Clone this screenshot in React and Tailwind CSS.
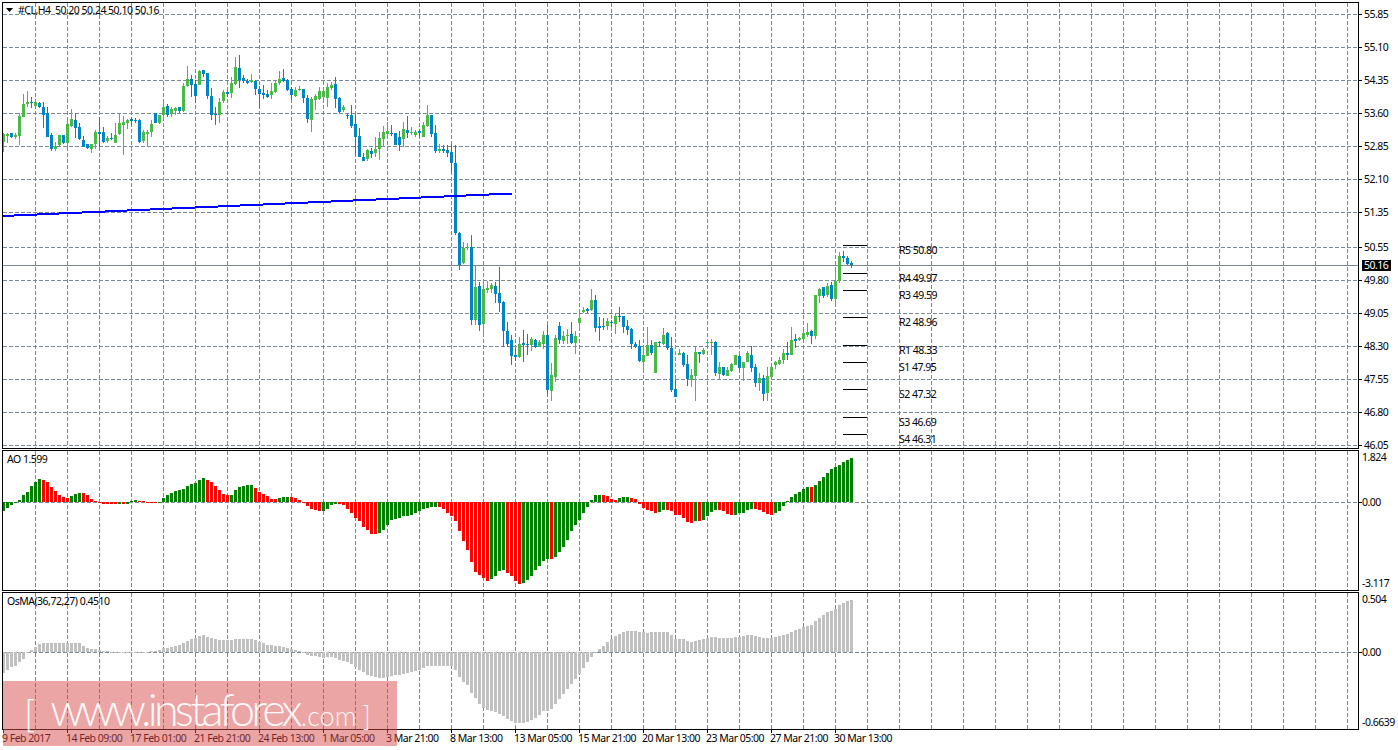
import React from "react";

const G = "#4cb848";
const B = "#0083c7";
const GRID = "#778899";

// [high, bodyTop, bodyBottom, low, colour], read at 3x from the left half of the chart
const candlesLeft = [
  [398, 402, 425, 455, G], [400, 402, 408, 430, G], [398, 399, 412, 415, B], [400, 405, 410, 418, G],
  [340, 348, 407, 435, G], [282, 312, 350, 352, G], [272, 305, 312, 322, G], [292, 307, 310, 325, B],
  [305, 306, 318, 322, G], [305, 309, 321, 325, B], [305, 322, 345, 385, B], [322, 339, 410, 412, B],
  [400, 405, 447, 452, B], [425, 437, 447, 452, G], [405, 405, 435, 437, G], [405, 405, 430, 432, B],
  [362, 372, 430, 442, G], [327, 357, 378, 380, G], [340, 360, 384, 415, B], [370, 382, 418, 420, B],
  [408, 420, 440, 440, B], [432, 432, 445, 447, B], [432, 432, 446, 460, G], [390, 396, 432, 447, G],
  [350, 396, 402, 440, B], [380, 396, 426, 428, B], [408, 414, 424, 428, G], [400, 413, 416, 420, B],
  [370, 405, 428, 430, G], [340, 370, 402, 405, G], [348, 366, 374, 465, G], [358, 360, 368, 388, G],
  [352, 357, 362, 375, B], [355, 360, 363, 370, B], [358, 360, 427, 430, B], [390, 396, 424, 430, G],
  [390, 396, 402, 438, G], [360, 372, 396, 410, G], [340, 340, 368, 370, B], [345, 346, 368, 372, G],
  [305, 320, 345, 352, G], [312, 318, 345, 350, B], [322, 327, 342, 350, G], [320, 323, 333, 345, G],
  [320, 321, 333, 340, B], [250, 258, 333, 335, G], [198, 237, 258, 262, G], [225, 237, 255, 290, B],
  [240, 252, 288, 308, B], [210, 213, 254, 255, G], [210, 211, 222, 230, B], [218, 219, 288, 298, B],
  [265, 288, 344, 360, B], [320, 342, 346, 375, B], [295, 306, 344, 370, G], [270, 277, 304, 310, G],
  [272, 277, 282, 290, B], [230, 250, 278, 295, G], [170, 202, 252, 255, G], [165, 205, 240, 265, B],
  [225, 235, 243, 250, B], [238, 242, 248, 253, B], [222, 240, 246, 248, G], [240, 243, 267, 285, B],
  [258, 267, 282, 325, B], [255, 280, 285, 298, B], [270, 283, 291, 295, B], [250, 274, 285, 296, G],
  [240, 248, 275, 280, G], [212, 238, 250, 255, G], [208, 234, 242, 245, B], [238, 240, 270, 272, B],
  [260, 266, 286, 300, B], [262, 270, 288, 290, G], [258, 266, 268, 272, G], [266, 267, 293, 310, B],
  [285, 293, 358, 368, B], [292, 296, 360, 395, G], [282, 288, 300, 330, G], [262, 272, 298, 300, G],
  [265, 272, 292, 300, G], [250, 262, 294, 322, G], [245, 254, 264, 270, G], [232, 252, 296, 325, B],
  [290, 294, 335, 338, B], [316, 321, 330, 335, G], [340, 344, 347, 358, B], [315, 346, 378, 385, B],
  [345, 372, 410, 465, B], [385, 408, 470, 472, B], [460, 470, 483, 484, B], [448, 450, 478, 482, G],
  [445, 452, 462, 475, B], [410, 447, 458, 470, G], [395, 413, 448, 480, G], [378, 396, 416, 440, G],
  [367, 393, 402, 410, G], [375, 398, 402, 408, B], [398, 398, 435, 435, B], [392, 410, 435, 452, B],
  [365, 388, 416, 440, G], [348, 390, 398, 415, B], [380, 396, 398, 405, G], [390, 396, 404, 410, G],
  [388, 394, 400, 410, B], [365, 376, 410, 412, G], [315, 345, 378, 380, G], [345, 345, 402, 412, B],
  [375, 400, 452, 460, B], [432, 448, 452, 458, G], [435, 448, 452, 460, B], [435, 450, 458, 470, B],
  [432, 456, 490, 518, B], [435, 490, 700, 705, B],
];

// same thing for the right half, these numbers start at y = 140
const candlesRight = [
  [277, 280, 375, 390, B], [305, 323, 370, 372, G], [310, 321, 324, 330, G], [285, 322, 540, 555, B],
  [378, 441, 540, 555, G], [425, 438, 555, 572, B], [420, 447, 552, 585, G], [422, 444, 450, 460, G],
  [430, 435, 447, 460, G], [425, 438, 462, 490, B], [382, 460, 488, 517, B], [482, 486, 573, 620, B],
  [545, 573, 612, 620, B], [585, 600, 648, 675, B], [625, 645, 650, 662, B], [590, 612, 652, 655, G],
  [570, 609, 614, 667, B], [582, 612, 616, 645, B], [590, 598, 615, 632, G], [598, 600, 620, 625, B],
  [600, 606, 620, 622, G], [572, 585, 612, 627, G], [555, 585, 750, 765, B], [668, 705, 752, 783, G],
  [585, 595, 710, 725, G], [545, 558, 600, 612, B], [572, 588, 603, 612, G], [567, 586, 588, 612, G],
  [545, 582, 608, 612, B], [572, 588, 608, 642, G], [520, 534, 548, 567, G], [502, 510, 515, 518, G],
  [505, 507, 512, 520, B], [447, 480, 510, 512, G], [465, 480, 563, 575, B], [530, 558, 564, 602, B],
  [535, 558, 560, 570, B], [535, 543, 557, 570, G], [540, 546, 550, 560, B], [522, 528, 552, 582, G],
  [502, 528, 531, 545, B], [528, 528, 560, 580, B], [540, 558, 570, 585, B], [565, 568, 612, 628, B],
  [605, 612, 620, 625, B], [600, 618, 663, 665, B], [620, 645, 666, 690, G], [560, 615, 647, 648, G],
  [600, 615, 640, 645, B], [605, 606, 698, 698, G], [603, 606, 609, 620, B], [563, 585, 613, 615, G],
  [575, 580, 624, 630, B], [590, 624, 750, 757, B], [720, 747, 770, 770, B], [628, 640, 644, 645, G],
  [635, 639, 675, 680, B], [645, 672, 717, 738, B], [688, 705, 720, 740, G], [620, 636, 707, 782, G],
  [636, 636, 641, 668, B], [625, 630, 642, 645, G], [597, 606, 608, 622, G], [598, 606, 608, 645, G],
  [603, 606, 698, 708, B], [667, 682, 702, 718, G], [680, 682, 705, 708, B], [680, 690, 708, 708, G],
  [670, 672, 693, 695, G], [645, 645, 675, 676, G], [645, 648, 684, 692, B], [665, 666, 684, 722, G],
  [632, 638, 666, 667, G], [618, 645, 683, 695, B], [672, 681, 729, 742, B], [698, 714, 729, 752, G],
  [705, 714, 762, 782, B], [682, 708, 758, 782, G], [682, 682, 710, 715, G], [663, 667, 675, 688, G],
  [650, 660, 672, 675, G], [628, 639, 660, 672, G], [605, 639, 645, 660, B], [560, 600, 645, 645, G],
  [583, 597, 603, 624, B], [590, 594, 600, 602, G], [573, 579, 597, 600, G], [548, 576, 585, 590, G],
  [570, 573, 588, 612, B], [465, 465, 588, 597, G], [445, 447, 468, 490, G], [440, 441, 468, 475, B],
  [430, 438, 466, 472, G], [425, 435, 477, 484, B], [393, 422, 477, 494, G], [335, 348, 424, 430, G],
  [333, 348, 354, 367, B], [348, 354, 372, 375, B], [363, 369, 376, 384, B],
];

const candles = [
  ...candlesLeft.map(([h, t, b, l, c]) => [h / 3, t / 3, b / 3, l / 3, c]),
  ...candlesRight.map(([h, t, b, l, c]) => [140 + h / 3, 140 + t / 3, 140 + b / 3, 140 + l / 3, c]),
];

// heights above (+) or under (-) the zero line, at 3x
const aoValues = [
  -28, -17, -9, -2, 6, 20, 30, 48, 60, 70, 67, 61, 46, 34, 22, 16, 13, 19, 25, 28, 28, 22, 10, 4, -3, -5, -5, -5, -7, -5,
  -7, -5, 3, 6, 3, 3, -2, -3, -4, -2, 12, 21, 27, 33, 36, 39, 48, 54, 57, 66, 72, 66, 60, 48, 36, 24, 20, 21, 36, 45, 48,
  51, 51, 42, 30, 24, 18, 9, 9, 12, 15, 15, 15, 12, 6, -3, -12, -22, -25, -28, -28, -20, -10, -5, -7, -10, -20, -32, -47,
  -58, -75, -83, -95, -95, -92, -83, -68, -55, -50, -47, -41, -41, -38, -32, -27, -22, -17, -14, -14, -14, -20, -32, -42,
  -57, -87, -117, -144, -180, -210, -219, -228, -237, -231, -222, -207, -204, -213, -222, -237, -246, -243, -234, -222,
  -204, -192, -177, -171, -171, -165, -150, -135, -114, -87, -69, -54, -33, -14, 6, 21, 21, 21, 18, 9, 6, 12, 15, 15, 12,
  9, -6, -18, -24, -27, -33, -30, -24, -24, -27, -39, -39, -48, -60, -63, -57, -57, -54, -42, -30, -24, -24, -27, -36, -39,
  -39, -33, -33, -24, -21, -21, -24, -30, -36, -39, -33, -27, -11, 3, 15, 24, 30, 39, 45, 45, 51, 63, 75, 87, 99, 105, 111,
  120, 126, 132,
];

const aoRed = [
  [10, 16], [20, 28], [30, 30], [34, 38], [51, 56], [63, 68], [72, 79], [84, 93], [109, 121], [126, 129], [137, 137],
  [150, 153], [157, 163], [166, 172], [174, 174], [179, 182], [188, 192], [202, 202],
];

const osmaValues = [
  -62, -53, -46, -41, -31, -20, -3, 6, 15, 24, 27, 28, 27, 26, 26, 26, 26, 27, 28, 26, 18, 12, 9, 9, 6, 3, 1, -1, -2, -1,
  -1, 0, 0, 0, -1, -1, 0, 2, 3, 6, 12, 12, 15, 18, 21, 27, 33, 39, 42, 48, 51, 45, 42, 39, 36, 36, 36, 36, 39, 39, 39, 39,
  39, 36, 30, 27, 21, 21, 18, 18, 15, 12, 9, 6, 3, 0, -9, -12, -13, -15, -17, -15, -15, -18, -24, -27, -30, -36, -45, -54,
  -60, -69, -72, -75, -77, -77, -75, -72, -70, -69, -66, -63, -60, -57, -54, -48, -42, -41, -41, -41, -41, -41, -41, -54,
  -75, -90, -99, -123, -138, -156, -168, -174, -177, -180, -186, -192, -201, -207, -213, -213, -213, -210, -204, -198,
  -189, -177, -177, -171, -156, -141, -126, -111, -96, -81, -66, -48, -30, -15, -1, 9, 18, 30, 39, 48, 54, 60, 63, 63, 63,
  60, 60, 57, 60, 60, 60, 60, 60, 51, 39, 39, 39, 33, 30, 33, 36, 39, 42, 45, 45, 42, 42, 42, 42, 45, 45, 48, 51, 51, 48,
  45, 42, 42, 42, 45, 48, 51, 54, 60, 66, 69, 75, 78, 81, 93, 102, 111, 120, 123, 129, 141, 147, 153, 157,
];

const priceLevels = [
  ["55.85", 14], ["55.10", 47], ["54.35", 80], ["53.60", 113], ["52.85", 146], ["52.10", 179], ["51.35", 212],
  ["50.55", 247], ["49.80", 280], ["49.05", 313], ["48.30", 346], ["47.55", 379], ["46.80", 412], ["46.05", 445],
];

const pivots = [
  ["R5 50.80", 245, 250], ["R4 49.97", 273, 278], ["R3 49.59", 290, 295], ["R2 48.96", 317, 322], ["R1 48.33", 345, 350],
  ["S1 47.95", 362, 367], ["S2 47.32", 389, 394], ["S3 46.69", 417, 422], ["S4 46.31", 434, 439],
];

const dates = [
  "9 Feb 2017", "14 Feb 09:00", "17 Feb 01:00", "21 Feb 21:00", "24 Feb 13:00", "1 Mar 05:00", "3 Mar 21:00",
  "8 Mar 13:00", "13 Mar 05:00", "15 Mar 21:00", "20 Mar 13:00", "23 Mar 05:00", "27 Mar 21:00", "30 Mar 13:00",
];

const barX = (k) => 3 + 4 * k;
const gridX = Array.from({ length: 42 }, (_, i) => 35 + 32 * i);

const isRed = (k) => aoRed.some(([from, to]) => k >= from && k <= to);

const Grid = ({ top, bottom, levels }) => (
  <g stroke={GRID} strokeWidth="1" strokeDasharray="4 2">
    {gridX.map((x) => (
      <line key={x} x1={x + 0.5} x2={x + 0.5} y1={top} y2={bottom} />
    ))}
    {levels.map((y) => (
      <line key={y} x1="3" x2="1358" y1={y + 0.5} y2={y + 0.5} />
    ))}
  </g>
);

const Histogram = ({ values, zero, color }) => (
  <g shapeRendering="crispEdges">
    {values.map((v, k) => {
      const h = Math.max(1, Math.round(Math.abs(v) / 3));
      return <rect key={k} x={barX(k) - 1} y={v > 0 ? zero - h : zero} width="3" height={h} fill={color(k)} />;
    })}
  </g>
);

// right price scale, labels and the small tick beside each one
const Scale = ({ height, top, labelX, labels, children }) => (
  <svg className="block shrink-0 overflow-visible" width="39" height={height} viewBox={`1359 ${top} 39 ${height}`}>
    {labels.map(([text, y, tick]) => (
      <g key={text}>
        {tick && <rect x="1359" y={y} width="3" height="1" fill="#000" />}
        <text x={labelX} y={y + 4} fontSize="10.5" fill="#000">
          {text}
        </text>
      </g>
    ))}
    {children}
  </svg>
);

export default function App() {
  return (
    <div className="relative w-[1398px] h-[750px] overflow-hidden bg-white pt-[2px] font-['Noto_Sans',sans-serif] text-[10.5px] leading-none tracking-[-0.5px] text-black">
      {/* price chart */}
      <div className="flex pl-[2px] h-[447px]">
        <div className="relative w-[1357px] border border-black">
          <svg className="block" width="1355" height="445" viewBox="3 3 1355 445">
            <Grid top={3} bottom={448} levels={priceLevels.map((l) => l[1])} />
            <rect x="3" y="265" width="1355" height="1" fill={GRID} />
            <g shapeRendering="crispEdges">
              {candles.map(([h, t, b, l, c], k) => (
                <g key={k} fill={c}>
                  <rect x={barX(k)} y={Math.round(h)} width="1" height={Math.max(1, Math.round(l) - Math.round(h))} />
                  <rect x={barX(k) - 1} y={Math.round(t)} width="3" height={Math.max(1, Math.round(b) - Math.round(t))} />
                </g>
              ))}
              <line x1="3" y1="216" x2="512" y2="193.5" stroke="#0000ff" strokeWidth="2" />
              {pivots.map(([label, y]) => (
                <rect key={label} x="843" y={y} width="24" height="1" fill="#000" />
              ))}
            </g>
            {pivots.map(([label, , y]) => (
              <text key={label} x="899" y={y + 4} fontSize="10.5" fill="#000">
                {label}
              </text>
            ))}
          </svg>
          <div className="absolute left-[3px] top-[2px] flex items-center gap-[5px]">
            <svg width="7" height="4" viewBox="0 0 7 4">
              <path d="M0 0h7L3.5 4z" fill="#000" />
            </svg>
            <span className="whitespace-pre">#CL,H4  50.20 50.24 50.10 50.16</span>
          </div>
        </div>
        <Scale height={447} top={2} labelX={1364} labels={priceLevels.map(([t, y]) => [t, y, true])}>
          <rect x="1362" y="260" width="29" height="11" fill="#000" />
          <text x="1364" y="269" fontSize="10.5" fill="#fff">
            50.16
          </text>
        </Scale>
      </div>

      {/* AO */}
      <div className="flex pl-[2px] h-[141px] mt-px">
        <div className="relative w-[1357px] border border-black">
          <svg className="block" width="1355" height="139" viewBox="3 451 1355 139">
            <Grid top={451} bottom={590} levels={[502]} />
            <Histogram values={aoValues} zero={502} color={(k) => (isRed(k) ? "#ff0000" : "#008000")} />
          </svg>
          <span className="absolute left-[4px] top-[3px]">AO 1.599</span>
        </div>
        <Scale height={141} top={450} labelX={1362} labels={[["1.824", 457, false], ["0.00", 502, true], ["-3.117", 583, false]]} />
      </div>

      {/* OsMA */}
      <div className="flex pl-[2px] h-[138px] mt-px">
        <div className="relative w-[1357px] border border-black">
          <svg className="block" width="1355" height="136" viewBox="3 593 1355 136">
            <Grid top={593} bottom={729} levels={[652]} />
            <Histogram values={osmaValues} zero={652} color={() => "#c0c0c0"} />
          </svg>
          <span className="absolute left-[4px] top-[3px]">OsMA(36,72,27) 0.4510</span>
        </div>
        <Scale height={138} top={592} labelX={1362} labels={[["0.504", 599, false], ["0.00", 652, true], ["-0.6639", 722, false]]} />
      </div>

      {/* time axis */}
      <div className="flex pl-[2px]">
        {dates.map((d) => (
          <div key={d} className="w-[64px] shrink-0 whitespace-nowrap">
            <div className="ml-px h-[3px] w-px bg-black" />
            <div>{d}</div>
          </div>
        ))}
      </div>

      {/* watermark */}
      <div className="absolute left-[3px] top-[681px] flex h-[65px] w-[394px] items-end bg-[#d94b4b]/50 font-['Lato',sans-serif] font-light tracking-normal text-white/95">
        <span className="ml-[21px] mb-[15px] text-[38px] leading-none">[</span>
        <span className="ml-[15px] mb-[14px] text-[45px] leading-none tracking-[-0.085em]">www.instaforex</span>
        <span className="ml-[2px] mb-[17px] text-[27px] leading-none">.com</span>
        <span className="ml-[6px] mb-[17px] text-[28px] leading-none">]</span>
      </div>
    </div>
  );
}
